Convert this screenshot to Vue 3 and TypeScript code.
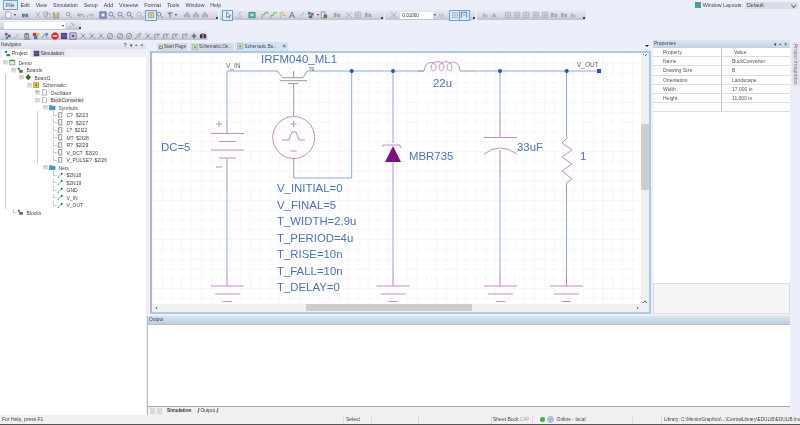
<script setup lang="ts">
type Shape = { d: string; f?: string; s?: string };

const menus = ["File", "Edit", "View", "Simulation", "Setup", "Add", "Vmeetw", "Format", "Tools", "Window", "Help"];

const icons: Record<string, Shape[]> = {
	doc: [{ d: "M2 1h4l2 2v5H2z", f: "#f4f5fa", s: "#8b90a0" }],
	binoc: [{ d: "M1 3h3v4H1zM5 3h3v4H5zM4 4h1v1H4z", f: "#6a7690" }],
	cut: [{ d: "M2 1l5 6M7 1L2 7", s: "#a0a4b2" }],
	copy: [{ d: "M1 1h4v5H1zM3.500 3h4.500v5H3.500z", f: "#dfe1ea", s: "#999eac" }],
	paste: [{ d: "M1.500 2h6v6h-6z", f: "#cdb98f", s: "#8f8a80" }, { d: "M3.500 1h2v2h-2z", f: "#eee" }],
	find: [{ d: "M7.500 7.500L5 5M5.500 3.500a2 2 0 1 1-4 0a2 2 0 1 1 4 0", s: "#7f8798" }],
	undo: [{ d: "M7.500 7C7.500 3.500 4 3 2.500 4.500M1.500 2.500v3h3", s: "#3f9b3c" }],
	redo: [{ d: "M1.500 7C1.500 3.500 5 3 6.500 4.500M7.500 2.500v3h-3", s: "#9ba0ad" }],
	fit: [{ d: "M1 1h7v7H1z", f: "#8aa0d0", s: "#46578c" }, { d: "M3 3h3v3H3z", f: "#e8ecf6" }],
	zoom: [{ d: "M5.500 3.500a2.200 2.200 0 1 1-4.400 0a2.200 2.200 0 1 1 4.400 0", f: "#dbe6f5", s: "#4f6d97" }, { d: "M5 5l3 3", s: "#4f6d97" }],
	zoomg: [{ d: "M5.500 3.500a2.200 2.200 0 1 1-4.400 0a2.200 2.200 0 1 1 4.400 0", f: "#e4e6ee", s: "#a0a5b3" }, { d: "M5 5l3 3", s: "#a0a5b3" }],
	note: [{ d: "M1.500 1.500h6v6h-6z", f: "#f1dca0", s: "#9c8a5a" }, { d: "M3 3.500h3M3 5.500h3", s: "#8a7f63" }],
	filter: [{ d: "M1 1.500h7L5.200 4.500V8L3.800 7V4.500z", f: "#8a8f9d" }],
	tool: [{ d: "M1 7h3V4H1zM5 7h3V4H5zM3 4h3V1.500H3z", f: "#a7acba" }],
	arrow: [{ d: "M3 1v6.500l1.500-1.500 1 2 1-.5-1-2h2z", f: "#fff", s: "#5d6472" }],
	letter: [{ d: "M6.500 2C4 1 2.500 2.500 4.500 4.500S5 8 2.500 7", s: "#a4a8b5" }],
	gblue: [{ d: "M1 1.500h7v6H1z", f: "#62bb9a", s: "#2f7f82" }, { d: "M3 3.500h3v2H3z", f: "#cfe9e4" }],
	gbrack: [{ d: "M1.500 8V4h3V1.500h3v2", s: "#54a93a" }],
	gwire: [{ d: "M1 8V5h3V2h4", s: "#5caa36" }],
	ywire: [{ d: "M1.500 8V2h3v3h3", s: "#d5ae16" }],
	a: [{ d: "M1.500 8L4.500 1l3 7M2.800 5.500h3.400", s: "#5b6270" }],
	pencil: [{ d: "M1.500 7.500l1-2.500 3.500-3.500 1.500 1.500L4 6.500z", f: "#c4c7d0" }],
	color: [{ d: "M1 1h3v3H1z", f: "#1f8f9b" }, { d: "M4.500 2h3v3h-3z", f: "#a0559d" }, { d: "M2 5h4v3H2z", f: "#4d7a46" }],
	docc: [{ d: "M1.500 1h4v7h-4z", f: "#eef0f5", s: "#6b7180" }, { d: "M4 4h4v4H4z", f: "#5f7d38" }],
	g1: [{ d: "M1 2h3v5H1zM5 3h3v4H5z", f: "#a5a9b7" }],
	g2: [{ d: "M1 1.500l6.500 6M7.500 1.500L1 7.500", s: "#9da1af" }],
	g3: [{ d: "M1.500 1.500h6v6h-6zM1.500 4.500h6M4.500 1.500v6", s: "#a4a8b6" }],
	g4: [{ d: "M2.500 2.500h1.500v5H2.500zM5 3.500l2.500 2-2.500 2z", f: "#a5a9b7" }],
	g5: [{ d: "M1 7l3.500-5L8 7z", f: "#aeb2bf" }],
	grid: [{ d: "M1.500 1.500h1v1h-1zM4 1.500h1v1H4zM6.500 1.500h1v1h-1zM1.500 4h1v1h-1zM4 4h1v1H4zM6.500 4h1v1h-1zM1.500 6.500h1v1h-1zM4 6.500h1v1H4zM6.500 6.500h1v1h-1z", f: "#3e4f72" }],
	snap: [{ d: "M1.500 7.500V1.500h6v6M3.500 4.500h2", s: "#3e4f72" }],
	tools: [{ d: "M1 8l3.500-3.500M5 1.500a2 2 0 0 1 2.500 2.500L6 3z", s: "#9499a8" }],
	r1: [{ d: "M1 1h3v3H1z", f: "#b53f8c" }, { d: "M4.500 3h3v3h-3z", f: "#3e6fb2" }, { d: "M2 5h2.500v3H2z", f: "#3d9c88" }],
	r2: [{ d: "M1 6h3V3.500h4", s: "#a9adbb" }],
	r3: [{ d: "M1 8h7M2 2h4v4H2z", s: "#2f5d80" }, { d: "M3 1h2v3H3z", f: "#c05c38" }],
	r4: [{ d: "M1 1h3.500v3.500H1z", f: "#d33030" }, { d: "M4.500 1H8v3.500H4.500z", f: "#e0c020" }, { d: "M2.500 4.500H6V8H2.500z", f: "#2e74c4" }],
	r5: [{ d: "M1 7l3-5 3 5", s: "#3b9f9f" }, { d: "M5 1h3v3H5z", f: "#6d8ac7" }],
	stop: [{ d: "M3 .500h3L8.500 3v3L6 8.500H3L.500 6V3z", f: "#d9222a" }, { d: "M2 3.800h5v1.400H2z", f: "#fff" }],
	r7: [{ d: "M1 1h7v7H1z", f: "#2d4da3" }, { d: "M1 3.500h7M1 5.500h7", s: "#e05555" }],
	r8: [{ d: "M1 1h7v7H1z", f: "#d9dbe8", s: "#3a4e9c" }, { d: "M3 3h3v3H3z", f: "#b5384d" }],
	probe: [{ d: "M1 8l2.500-2.500M3 3l3 3M5 2.500l1.500-1.500 1.500 1.500L6.500 4z", s: "#6d7382" }],
	comp: [{ d: "M1.500 7.500L7 2M2 2h2M6 7h2", s: "#767c8b" }, { d: "M3.500 3.500h2v2h-2z", f: "#8c92a0" }],
	ring: [{ d: "M7.500 4.500a3 3 0 1 1-6 0a3 3 0 1 1 6 0M2.500 7L6.500 2", s: "#7c8291" }],
	yy: [{ d: "M2 8V2.500h2M4 2.500h4M5.500 2.500V6", s: "#6c7280" }],
	gear: [{ d: "M6.500 4.500a2 2 0 1 1-4 0a2 2 0 1 1 4 0", f: "#6d7280" }, { d: "M4.500 1v7M1 4.500h7", s: "#6d7280" }],
	binoc2: [{ d: "M1 2.500h3V7H1zM5 2.500h3V7H5z", f: "#2b3550" }, { d: "M3 1h1v2H3zM5 1h1v2H5z", f: "#c23" }],
};

const row1: string[][] = [
	["doc", "drop", "sp4", "binoc", "sp3", "cut", "copy", "paste", "sp3", "find", "sp3", "undo", "redo", "sp3", "fit", "zoom", "zoom", "zoom", "zoomg", "sp2", "*note", "zoom", "filter", "drop", "sp4", "tool", "tool", "tool", "grip"],
	["*arrow", "sp3", "letter", "sp3", "gblue", "sp3", "gbrack", "gwire", "ywire", "a", "pencil", "color", "drop", "docc", "sp3", "g1", "sp3", "g2", "g3", "g1", "grip"],
	["sp4", "g2", "combo", "drop", "gin", "sp3", "*grid", "*snap", "grip"],
	["sp4", "g4", "g5", "sp4", "g3", "g3", "g3", "g3", "g3", "g1", "g1", "g4", "grip"],
];
const row3 = ["r1", "r2", "r3", "r4", "r5", "stop", "r7", "r8", "comp", "comp", "comp", "ring", "ring", "ring", "probe", "comp", "yy", "yy", "yy", "yy", "gear", "binoc2"];

type Row = { d: number; label: string; icon: string; exp?: string; guides?: number[] };
const sym = [1, 5];
const net = [1];
const rows: Row[] = [
	{ d: 0, label: "Demo", icon: "proj", exp: "-" },
	{ d: 1, label: "Boards", icon: "boards", exp: "-" },
	{ d: 2, label: "Board1", icon: "board", exp: "-", guides: [1] },
	{ d: 3, label: "Schematic", icon: "sch", exp: "-", guides: [1] },
	{ d: 4, label: "Oscillator", icon: "page", exp: "+", guides: [1] },
	{ d: 4, label: "BuckConverter", icon: "page", exp: "-", guides: [1] },
	{ d: 5, label: "Symbols", icon: "folder", exp: "-", guides: [1] },
	...["C?  $2I23", "D?  $2I27", "L?  $2I22", "M?  $2I28", "R?  $2I29", "V_DC?  $2I20", "V_PULSE?  $2I26"].map((label) => ({ d: 6, label, icon: "sym", exp: "t", guides: sym })),
	{ d: 5, label: "Nets", icon: "folder", exp: "-", guides: [1] },
	...["$2N18", "$2N19", "GND", "V_IN", "V_OUT"].map((label) => ({ d: 6, label, icon: "net", exp: "t", guides: net })),
	{ d: 1, label: "Blocks", icon: "boards", exp: "t" },
];

const props_rows = [
	["Name", "BuckConverter"],
	["Drawing Size", "B"],
	["Orientation", "Landscape"],
	["Width", "17.000 in"],
	["Height", "11.000 in"],
	["", ""],
];

const params = ["V_INITIAL=0", "V_FINAL=5", "T_WIDTH=2.9u", "T_PERIOD=4u", "T_RISE=10n", "T_FALL=10n", "T_DELAY=0"];

const blue_wires = [
	"M227 120V71H277", "M307 71H424", "M475 71H599", "M227 190V270", "M351.700 178V71", "M293.700 178H351.700",
	"M393 71V143", "M393 162V270", "M500 71V112", "M500 178V270", "M566.500 71V134", "M566.500 195V270",
];
const grey_wires = [
	"M227 120V133", "M227 158V190", "M227 270V286", "M293.700 84V116", "M293.700 159V178", "M460 71H475",
	"M393 270V286", "M500 112V137", "M500 150V178", "M500 270V286", "M566.500 183V195", "M566.500 270V286", "M418 71H424",
	"M277 71L283 77.700M303 77.700L307 71M293.700 71V77",
];
const grounds = [227.5, 393, 500.5, 566.5];
</script>

<template>
	<div class="app">
		<header class="chrome">
			<div class="menu_row">
				<span v-for="(m, i) in menus" :key="m" class="menu_item" :class="{ open: i == 0 }">{{ m }}</span>
				<div class="layouts">
					<svg class="layout_icon" viewBox="0 0 9 9"><path d="M0 0h9v9H0z" fill="#5f8fb0" /><path d="M2 2h5v5H2z" fill="#4fb04a" /></svg>
					<span>Window Layouts:</span>
					<div class="layout_combo">Default<i class="combo_arrow"></i></div>
				</div>
			</div>
			<div class="tool_row">
				<div v-for="(group, g) in row1" :key="g" class="bar" :class="'bar' + g">
					<template v-for="(item, i) in group" :key="i">
						<i v-if="item.startsWith('sp')" :style="{ width: item.slice(2) + 'px' }"></i>
						<i v-else-if="item == 'drop'" class="drop"></i>
						<i v-else-if="item == 'grip'" class="grip"></i>
						<div v-else-if="item == 'combo'" class="value_combo">0.01000</div>
						<span v-else-if="item == 'gin'" class="unit">in</span>
						<span v-else class="icon" :class="{ active: item[0] == '*' }">
							<svg viewBox="0 0 9 9"><path v-for="(p, k) in icons[item.replace('*', '')]" :key="k" :d="p.d" :fill="p.f ?? 'none'" :stroke="p.s ?? 'none'" stroke-width="0.8" /></svg>
						</span>
					</template>
				</div>
			</div>
			<div class="tool_row second">
				<div class="bar bar_small">
					<div class="search_combo"><i class="drop"></i></div>
					<span class="icon"><svg viewBox="0 0 9 9"><path v-for="(p, k) in icons.tools" :key="k" :d="p.d" fill="none" :stroke="p.s" stroke-width="0.8" /></svg></span>
					<i class="grip"></i>
				</div>
			</div>
			<div class="tool_row third">
				<div class="bar bar_tools">
					<span v-for="(item, i) in row3" :key="i" class="icon">
						<svg viewBox="0 0 9 9"><path v-for="(p, k) in icons[item]" :key="k" :d="p.d" :fill="p.f ?? 'none'" :stroke="p.s ?? 'none'" stroke-width="0.8" /></svg>
					</span>
				</div>
			</div>
		</header>

		<main class="work">
			<aside class="navigator">
				<div class="pane_head plain">
					<span>Navigator</span>
					<span class="pane_btns">? ▾ ▪ ×</span>
				</div>
				<div class="nav_tabs">
					<span class="nav_tab on"><svg viewBox="0 0 9 9"><path d="M1 1h3v3H1zM3 5h5v3H3z" fill="#2f8a7c" /></svg>Project</span>
					<span class="nav_tab"><svg viewBox="0 0 9 9"><path d="M1 1h7v7H1z" fill="#3a3f96" /><path d="M1 4h7M4 1v7" stroke="#d05a5a" stroke-width="0.8" /></svg>Simulation</span>
				</div>
				<div class="tree">
					<div v-for="(r, i) in rows" :key="i" class="tree_row">
						<i v-for="n in r.d" :key="n" class="cell" :class="{ guide: r.guides?.includes(n) }"></i>
						<i class="cell exp" :class="r.exp == 't' ? 'tee' : 'box'">{{ r.exp == 't' ? "" : r.exp }}</i>
						<svg class="tree_icon" viewBox="0 0 9 9">
							<template v-if="r.icon == 'proj'"><path d="M1 2h7v6H1z" fill="#e8efe8" stroke="#4a7d5a" stroke-width="0.8" /><path d="M1 1h7v2H1z" fill="#2f9a55" /></template>
							<template v-else-if="r.icon == 'boards'"><path d="M1 1h3v3H1z" fill="#3f8a78" /><path d="M3 4h5v4H3z" fill="#5f6a50" /></template>
							<path v-else-if="r.icon == 'board'" d="M4.500 .500L8.500 4.500 4.500 8.500 .500 4.500z" fill="#3e6a18" />
							<template v-else-if="r.icon == 'sch'"><path d="M1 1h7v7H1z" fill="#e8d23a" stroke="#77711e" stroke-width="0.8" /><path d="M3.500 3h2v3h-2z" fill="#7a4a20" /></template>
							<path v-else-if="r.icon == 'page'" d="M2 .500h3.500L7.500 2.500v6H2z" fill="#fff" stroke="#666" stroke-width="0.7" />
							<path v-else-if="r.icon == 'folder'" d="M.500 2h3l1 1h4v5H.500z" fill="#2f9fd8" stroke="#1f5f90" stroke-width="0.5" />
							<template v-else-if="r.icon == 'sym'"><path d="M2.500 .500h4v8h-4z" fill="#fff" stroke="#333" stroke-width="0.7" /><path d="M1 2.500h1.500M1 6h1.500" stroke="#333" stroke-width="0.7" /></template>
							<template v-else><path d="M1 8L7 2" stroke="#2a9a9a" stroke-width="0.9" /><path d="M5.500 1.500h2v2h-2z" fill="#223" /><path d="M1 6.500h1.500V8H1z" fill="#2a9a9a" /></template>
						</svg>
						<span class="tree_label" :class="{ current: r.label == 'BuckConverter' }">{{ r.label }}</span>
					</div>
				</div>
			</aside>

			<section class="center">
				<div class="doc_tabs">
					<span class="doc_tab first"><svg viewBox="0 0 9 9"><path d="M0 .500h9v8H0z" fill="#57a63e" /><path d="M2 3h5v3H2z" fill="#d8edc8" /></svg>Start Page</span>
					<span class="doc_tab"><svg viewBox="0 0 9 9"><path d="M1 1h7v7H1z" fill="#d9e6d0" stroke="#7a9a70" stroke-width="0.7" /><path d="M3 3h3v3H3z" fill="#6aa64e" /></svg>Schematic.Os..</span>
					<span class="doc_tab on"><svg viewBox="0 0 9 9"><path d="M1 1h7v7H1z" fill="#d9e6d0" stroke="#7a9a70" stroke-width="0.7" /><path d="M3 3h3v3H3z" fill="#6aa64e" /></svg>Schematic.Bu..<b>×</b></span>
					<i class="doc_menu"></i>
				</div>
				<div class="doc">
					<div class="doc_body">
						<svg class="sheet" viewBox="152 53 489 251">
							<path v-for="w in blue_wires" :key="w" :d="w" class="wire" />
							<path v-for="w in grey_wires" :key="w" :d="w" class="stub" />

							<!-- battery -->
							<path class="part" d="M216 124h6M219 121v6M211 133.500h33M219 141.500h17M211 150h33M219 158h17M216 167h6" />
							<!-- mosfet -->
							<path class="stub" d="M283 77.700H303M280 80.700H307M288 83.500H298" />
							<!-- pulse source -->
							<circle class="part" cx="293.700" cy="137.500" r="21" />
							<path class="part" d="M290.500 124h6M293.500 121v6M282 140h7l3-8h4l3 8h6M290.500 151h6" />
							<!-- diode -->
							<path d="M393 146L401 162H385z" fill="#800e80" />
							<path class="part" d="M383 147V145H400V147H402" />
							<!-- inductor -->
							<path class="part" d="M424 71C425 61 435 60 436 67C436 72 431 72 431 67C432 60 444 60 444 67C444 72 439 72 439 67C440 60 452 60 452 67C452 72 447 72 447 67C448 60 460 60 460 71" />
							<!-- capacitor -->
							<path class="part" d="M484 137.500H517M484 154Q500 142 517 154" />
							<!-- resistor -->
							<path class="part" d="M566.500 134L567 138L562 143L572 150L562 157L572 164L562 171L572 179L566.500 183" />
							<!-- grounds -->
							<g v-for="x in grounds" :key="x">
								<path class="part" :d="`M${x - 16.5} 286h33M${x - 12.5} 294h25M${x - 4.5} 301.500h9`" />
							</g>

							<circle v-for="x in [351.7, 393, 500, 566.7]" :key="x" class="dot" :cx="x" cy="71" r="2" />
							<rect class="dot" x="597" y="69" width="4" height="4" />

							<text class="net" x="226" y="68">V_IN</text>
							<text class="net" x="577" y="66.500">V_OUT</text>
							<text class="mini" x="309" y="70.500">?9</text>
							<text class="label big" x="261" y="62.500">IRFM040_ML1</text>
							<text class="label" x="161" y="151">DC=5</text>
							<text class="label" x="433" y="87">22u</text>
							<text class="label" x="409" y="160">MBR735</text>
							<text class="label" x="517" y="151">33uF</text>
							<text class="label" x="580" y="160">1</text>
							<text v-for="(p, i) in params" :key="p" class="label" x="277" :y="192 + i * 16.5">{{ p }}</text>
						</svg>
						<div class="v_scroll">
							<i class="up"></i>
							<i class="v_thumb"></i>
							<i class="down"></i>
						</div>
					</div>
					<div class="h_scroll">
						<i class="left"></i>
						<i class="h_thumb"></i>
						<i class="right"></i>
					</div>
				</div>
			</section>

			<aside class="properties">
				<div class="pane_head">
					<span>Properties</span>
					<span class="pane_btns">▾ ▪ ×</span>
				</div>
				<div class="prop_grid">
					<div class="prop_row head"><span>Property</span><span>Value</span></div>
					<div v-for="(r, i) in props_rows" :key="i" class="prop_row">
						<span>{{ r[0] }}</span><span>{{ r[1] }}</span>
					</div>
				</div>
				<div class="prop_fill"></div>
				<div class="prop_desc"></div>
			</aside>

			<div class="side_rail"><span class="rail_tab">Project Integration</span></div>

			<section class="output">
				<div class="pane_head">Output</div>
				<div class="out_body"></div>
				<div class="out_tabs">
					<i class="nav_box"></i><i class="nav_box"></i>
					<b>Simulation</b>
					<span>Output</span>
				</div>
			</section>
		</main>

		<footer class="status">
			<span class="st st_help">For Help, press F1</span>
			<span class="st st_sel">Select</span>
			<span class="st st_a"></span>
			<span class="st st_b"></span>
			<span class="st st_sheet">Sheet Buck <em>CAP</em></span>
			<span class="st st_online">
				<i class="led"></i>
				<svg viewBox="0 0 9 9"><circle cx="4.500" cy="4.500" r="3.800" fill="#c9d6ea" stroke="#6f8fb8" stroke-width="0.7" /><path d="M4.500 1v7M1 4.500h7" stroke="#6f8fb8" stroke-width="0.6" /></svg>
				Online - local
			</span>
			<span class="st st_c"></span>
			<span class="st st_lib">Library: C:\MentorGraphics\...\CentralLibrary\EDULIB\EDULIB.lmc</span>
		</footer>
	</div>
</template>

<style>
html,
body {
	margin: 0;
	overflow: hidden;
	background: #eceef9;
}
</style>

<style scoped>
.app {
	width: 800px;
	height: 425px;
	display: flex;
	flex-direction: column;
	overflow: hidden;
	background: #eceef9;
	font-family: "Liberation Sans", Arial, sans-serif;
	font-size: 5.3px;
	color: #333;
	filter: blur(0.3px);
}

i {
	display: block;
	font-style: normal;
	flex: none;
}

.chrome {
	height: 40px;
	flex: none;
	display: flex;
	flex-direction: column;
}

.menu_row {
	height: 10px;
	display: flex;
	align-items: center;
	padding-left: 3px;
	color: #3a3d4a;
}

.menu_item {
	padding: 0 2px;
	line-height: 8px;
	border: 1px solid transparent;
}

.menu_item.open {
	background: #dbe8f6;
	border-color: #6aa5d8;
}

.layouts {
	margin-left: auto;
	display: flex;
	align-items: center;
	gap: 2px;
	padding-right: 2px;
}

.layout_icon {
	width: 6px;
	height: 6px;
}

.layout_combo {
	width: 53px;
	height: 7px;
	background: #dcdde2;
	display: flex;
	align-items: center;
	justify-content: space-between;
	padding: 0 3px 0 2px;
	box-sizing: border-box;
}

.combo_arrow {
	width: 2.5px;
	height: 2.5px;
	border-right: 0.7px solid #666;
	border-bottom: 0.7px solid #666;
	transform: rotate(45deg);
}

.tool_row {
	height: 10px;
	display: flex;
	gap: 1.5px;
}

.second,
.third {
	margin-top: 1px;
	height: 9px;
}

.bar {
	display: flex;
	align-items: center;
	height: 100%;
	background: linear-gradient(#e8e9f4, #d8dae6 60%, #bec0cd);
	border-radius: 0 2px 2px 0;
	flex: none;
	box-sizing: border-box;
}

.bar0 {
	width: 218px;
	padding-left: 3.5px;
}

.bar1 {
	width: 164px;
	padding-left: 3.5px;
}

.bar2 {
	width: 90px;
}

.bar3 {
	width: 109px;
}

.bar_small {
	width: 81px;
	padding-left: 4px;
}

.bar_tools {
	width: 208px;
	padding-left: 3.5px;
}

.icon {
	width: 9.3px;
	height: 9px;
	display: flex;
	align-items: center;
	justify-content: center;
	flex: none;
	box-sizing: border-box;
}

.icon svg {
	width: 8px;
	height: 8px;
	display: block;
}

.icon.active {
	background: #dcebf8;
	outline: 0.8px solid #5da4de;
	outline-offset: -0.8px;
}

.drop {
	width: 0;
	height: 0;
	margin: 0 1px;
	border-left: 1.5px solid transparent;
	border-right: 1.5px solid transparent;
	border-top: 2px solid #333;
}

.grip {
	margin-left: auto;
	width: 2px;
	height: 2.5px;
	background: #444;
	align-self: flex-end;
	margin-bottom: 1px;
	margin-right: 0.5px;
}

.value_combo {
	width: 33px;
	height: 7px;
	background: #fff;
	line-height: 7px;
	padding-left: 2px;
	box-sizing: border-box;
	font-size: 4.6px;
	flex: none;
	margin-left: 2px;
}

.unit {
	color: #9a9eac;
	margin: 0 4px 0 2px;
}

.search_combo {
	width: 61px;
	height: 7px;
	background: #fff;
	display: flex;
	align-items: center;
	justify-content: flex-end;
	margin-right: 1px;
}

.work {
	height: 375px;
	flex: none;
	display: grid;
	grid-template-columns: 146px 505px 139px 10px;
	grid-template-rows: 274px 1fr;
}

.pane_head {
	height: 8px;
	flex: none;
	display: flex;
	align-items: center;
	justify-content: space-between;
	padding: 0 2px 0 1px;
	background: linear-gradient(#dbe7f2, #bed2e3);
	font-size: 4.8px;
	line-height: 8px;
	color: #3c4350;
}

.pane_head.plain {
	background: linear-gradient(#eef0f6, #dcdfe9);
}

.pane_btns {
	letter-spacing: 0.8px;
	color: #333;
	font-size: 5px;
}

.navigator {
	grid-column: 1;
	grid-row: 1 / 3;
	margin-top: 1px;
	display: flex;
	flex-direction: column;
	min-height: 0;
}

.nav_tabs {
	height: 8px;
	flex: none;
	display: flex;
	padding-left: 2px;
	gap: 1px;
}

.nav_tab {
	display: flex;
	align-items: center;
	gap: 1px;
	padding: 0 2px;
	background: #e3e5ee;
	font-size: 5px;
}

.nav_tab svg {
	width: 7px;
	height: 7px;
}

.nav_tab.on {
	background: #fff;
}

.tree {
	flex: 1;
	background: #fff;
	padding-top: 1.8px;
}

.tree_row {
	height: 7.5px;
	display: flex;
	align-items: center;
	padding-left: 1px;
}

.cell {
	width: 8px;
	height: 7.5px;
	box-sizing: border-box;
}

.guide {
	background: linear-gradient(#ccc, #ccc) 3.5px 0 / 1px 100% no-repeat;
}

.exp.box {
	font-size: 4.5px;
	line-height: 5px;
	text-align: center;
	color: #777;
	background: linear-gradient(#d8dbe2, #d8dbe2) 1.5px 1.5px / 5px 4.5px no-repeat;
}

.exp.tee {
	background:
		linear-gradient(#ccc, #ccc) 3.5px 0 / 1px 4px no-repeat,
		linear-gradient(#ccc, #ccc) 3.5px 3.5px / 4.5px 1px no-repeat;
}

.tree_icon {
	width: 6.5px;
	height: 6.5px;
	flex: none;
	margin-right: 3px;
}

.tree_label {
	font-size: 5px;
	white-space: pre;
	color: #444;
}

.tree_label.current {
	background: #eeeeee;
}

.center {
	grid-column: 2;
	grid-row: 1;
	min-width: 0;
	display: flex;
	flex-direction: column;
	padding-left: 1px;
}

.doc_tabs {
	height: 10px;
	margin-top: 1px;
	flex: none;
	display: flex;
	align-items: flex-end;
	padding-left: 10px;
	gap: 1.5px;
}

.doc_tab {
	height: 8.5px;
	display: flex;
	align-items: center;
	gap: 1px;
	padding: 0 2px;
	background: #d6dae6;
	font-size: 4.7px;
	color: #3f4552;
	border-radius: 1px 1px 0 0;
	box-sizing: border-box;
	white-space: nowrap;
}

.doc_tab svg {
	width: 6.5px;
	height: 6.5px;
}

.doc_tab.first {
	width: 31px;
}

.doc_tab:nth-child(2) {
	width: 44px;
}

.doc_tab.on {
	width: 53px;
	background: #cfe3f1;
	height: 9.5px;
}

.doc_tab b {
	margin-left: auto;
	font-size: 5.5px;
}

.doc_menu {
	margin-left: auto;
	margin-right: 2px;
	margin-bottom: 4px;
	width: 0;
	height: 0;
	border-left: 2px solid transparent;
	border-right: 2px solid transparent;
	border-top: 2.5px solid #222;
}

.doc {
	height: 263px;
	flex: none;
	margin-left: 3px;
	box-sizing: border-box;
	border: 2px solid #a9cbe3;
	border-left-color: #b5b8bd;
	display: flex;
	flex-direction: column;
	background: #f0f0f0;
}

.doc_body {
	display: flex;
	height: 251px;
	flex: none;
}

.sheet {
	width: 489px;
	height: 251px;
	flex: none;
	display: block;
	background-color: #fff;
	background-image:
		linear-gradient(#f6f6f6 1px, transparent 1px),
		linear-gradient(90deg, #f6f6f6 1px, transparent 1px);
	background-size: 9.8px 9.8px;
}

.wire {
	fill: none;
	stroke: #8ba6ea;
	stroke-width: 1;
}

.stub {
	fill: none;
	stroke: #999;
	stroke-width: 1;
}

.part {
	fill: none;
	stroke: #c68cca;
	stroke-width: 1;
}

.dot {
	fill: #1f52d0;
}

.net {
	font-size: 6.5px;
	fill: #666;
}

.mini {
	font-size: 4.5px;
	fill: #555;
}

.label {
	font-size: 11.4px;
	fill: #4c6fc0;
}

.label.big {
	font-size: 11.5px;
}

.v_scroll {
	width: 8px;
	flex: none;
	display: flex;
	flex-direction: column;
	background: #f0f0f0;
}

.up,
.down {
	height: 5px;
	flex: none;
	background:
		linear-gradient(45deg, transparent 50%, #666 50%, #666 62%, transparent 62%) 1.5px 1px / 2.5px 2.5px no-repeat,
		linear-gradient(-45deg, transparent 50%, #666 50%, #666 62%, transparent 62%) 4px 1px / 2.5px 2.5px no-repeat;
}

.down {
	transform: scaleY(-1);
	margin-top: auto;
}

.v_thumb {
	height: 66px;
	margin-top: 66px;
	background: #cdcdcd;
}

.h_scroll {
	height: 7px;
	flex: none;
	display: flex;
	align-items: center;
	background: #f0f0f0;
	padding: 0 10px 0 3px;
}

.left,
.right {
	width: 0;
	height: 0;
	border-top: 1.5px solid transparent;
	border-bottom: 1.5px solid transparent;
}

.left {
	border-right: 2px solid #555;
}

.right {
	border-left: 2px solid #555;
	margin-left: auto;
}

.h_thumb {
	width: 166px;
	height: 7px;
	margin-left: 149px;
	background: #cdcdcd;
}

.output {
	grid-column: 2 / 4;
	grid-row: 2;
	display: flex;
	flex-direction: column;
	margin-top: 1.5px;
	margin-left: 1px;
	background: #fff;
	border-left: 1px solid #bbb;
	min-height: 0;
}

.output .pane_head {
	border-bottom: 1px solid #bdbdbd;
	background: linear-gradient(#d8e5f0, #bcd0e1);
}

.out_body {
	flex: 1;
	background: #fff;
}

.out_tabs {
	height: 8.5px;
	flex: none;
	display: flex;
	align-items: center;
	gap: 2px;
	padding-left: 2px;
	background: #f0f0f0;
	border-top: 1px solid #aaa;
	font-size: 4.8px;
}

.nav_box {
	width: 5px;
	height: 6px;
	background: #d9d9d9;
}

.out_tabs b {
	margin-left: 3px;
}

.out_tabs span {
	margin-left: 4px;
	padding: 0 3px;
	position: relative;
}

.out_tabs span::before,
.out_tabs span::after {
	content: "";
	position: absolute;
	top: 0;
	bottom: 0;
	width: 0.7px;
	background: #666;
	transform: skewX(-14deg);
}

.out_tabs span::before {
	left: 0;
}

.out_tabs span::after {
	right: 0;
}

.properties {
	grid-column: 3;
	grid-row: 1;
	margin-left: 2px;
	display: flex;
	flex-direction: column;
	background: #fff;
	min-height: 0;
}

.prop_grid {
	flex: none;
	font-size: 5px;
}

.prop_row {
	height: 9.2px;
	display: grid;
	grid-template-columns: 68px 1fr;
	align-items: center;
	box-sizing: border-box;
	border-bottom: 0.8px solid #dedede;
	color: #555;
}

.prop_row span {
	padding-left: 10px;
}

.prop_row span + span {
	border-left: 0.8px solid #c9c9c9;
	height: 100%;
	display: flex;
	align-items: center;
}

.prop_row.head span + span {
	padding-left: 12px;
}

.prop_fill {
	flex: 1;
}

.prop_desc {
	height: 31px;
	flex: none;
	background: #f5f5f5;
	border: 1px solid #ddd;
	box-sizing: border-box;
}

.side_rail {
	grid-column: 4;
	grid-row: 1;
	padding-left: 2px;
	padding-top: 2px;
	box-sizing: border-box;
}

.rail_tab {
	display: block;
	width: 8px;
	height: 44px;
	background: #e3e4ea;
	writing-mode: vertical-rl;
	font-size: 5px;
	line-height: 8px;
	color: #77797f;
	padding-top: 2px;
	box-sizing: border-box;
}

.status {
	height: 10px;
	flex: none;
	display: flex;
	background: #f0f0f0;
	border-bottom: 1px solid #555;
	box-sizing: border-box;
	font-size: 5px;
	line-height: 9px;
	color: #444;
}

.st {
	box-sizing: border-box;
	padding-left: 2px;
	flex: none;
	border-right: 0.7px solid #dcdcdc;
	white-space: nowrap;
	overflow: hidden;
}

.st_help {
	width: 344px;
}

.st_sel {
	width: 28px;
}

.st_a {
	width: 47px;
}

.st_b {
	width: 73px;
}

.st_sheet {
	width: 41px;
	padding-left: 1px;
}

.st_sheet em {
	font-style: normal;
	color: #a0a0a0;
	font-size: 4.6px;
}

.st_online {
	width: 100px;
	display: flex;
	align-items: center;
	gap: 2.5px;
	padding-left: 7px;
}

.st_online svg {
	width: 7px;
	height: 7px;
}

.led {
	width: 4.5px;
	height: 4.5px;
	border-radius: 50%;
	background: #3fb52f;
}

.st_c {
	width: 29px;
}

.st_lib {
	flex: 1;
	border-right: 0;
	font-size: 4.7px;
}
</style>
